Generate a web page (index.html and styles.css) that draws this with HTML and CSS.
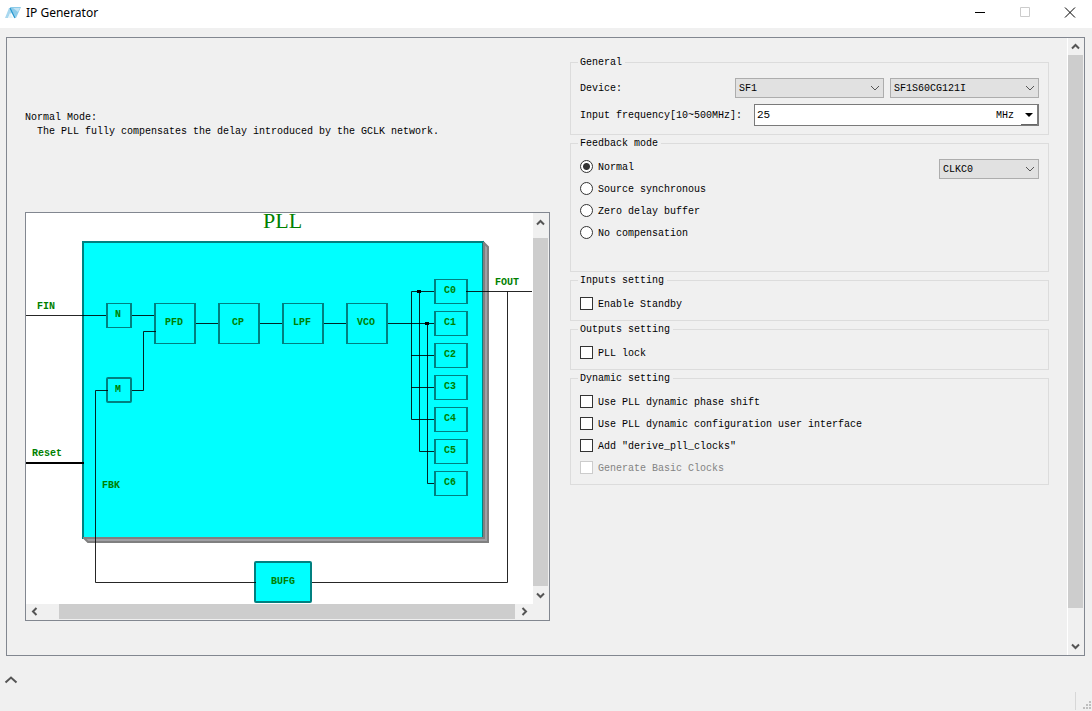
FILE: index.html
```html
<!DOCTYPE html>
<html lang="en">
<head>
<meta charset="utf-8">
<title>IP Generator</title>
<link rel="stylesheet" href="styles.css">
</head>
<body>
<header class="titlebar">
  <svg class="logo" width="16" height="12" viewBox="0 0 16 12" aria-hidden="true">
    <path d="M5 0H16L11 11Z" fill="#8ccbe9"/>
    <path d="M8 1H15L13 5Z" fill="#c3e3f3"/>
    <path d="M0 11L4 1L7 6L5 7L3 11Z" fill="#a9d8ef"/>
    <path d="M5 1L10 11" stroke="#2c9bd2" stroke-width="1.500"/>
    <path d="M3 11L5 6L8 11Z" fill="#e6f5fb"/>
  </svg>
  <h1 class="title">IP Generator</h1>
  <div class="window-buttons">
    <button class="window-button" type="button" aria-label="Minimize"><svg width="12" height="12" viewBox="0 0 12 12"><path d="M1 5.500H11" stroke="#000"/></svg></button>
    <button class="window-button" type="button" aria-label="Maximize" disabled><svg width="12" height="12" viewBox="0 0 12 12"><path d="M1.500 .5H10.500V9.500H1.500Z" fill="none" stroke="#ccc"/></svg></button>
    <button class="window-button" type="button" aria-label="Close"><svg width="12" height="12" viewBox="0 0 12 12"><path d="M1 .5L11 10.500M11 .5L1 10.500" stroke="#000"/></svg></button>
  </div>
</header>

<main class="frame">
  <div class="content">
    <section class="overview">
      <div class="description">
        <p>Normal Mode:</p>
        <p class="indented">The PLL fully compensates the delay introduced by the GCLK network.</p>
      </div>
      <div class="diagram">
        <svg class="drawing" viewBox="26 213 507 391" role="img" aria-label="PLL block diagram">
          <path class="shadow" d="M84 538L88 542H488V247L484 243V538Z"/>
          <rect class="chip" x="83" y="242" width="400" height="296"/>
          <path class="shadow-edge" d="M83 538H485M484 539V242"/>
          <g class="block">
            <path d="M106 303h26v25h-26zM108 304v23h22v-23z"/>
            <path d="M154 303h42v41h-42zM156 304v39h38v-39z"/>
            <path d="M218 303h42v41h-42zM220 304v39h38v-39z"/>
            <path d="M282 303h42v41h-42zM284 304v39h38v-39z"/>
            <path d="M346 303h42v41h-42zM348 304v39h38v-39z"/>
            <path d="M434 279h34v25h-34zM436 280v23h30v-23z"/>
            <path d="M434 311h34v25h-34zM436 312v23h30v-23z"/>
            <path d="M434 343h34v25h-34zM436 344v23h30v-23z"/>
            <path d="M434 375h34v25h-34zM436 376v23h30v-23z"/>
            <path d="M434 407h34v25h-34zM436 408v23h30v-23z"/>
            <path d="M434 439h34v25h-34zM436 440v23h30v-23z"/>
            <path d="M434 471h34v25h-34zM436 472v23h30v-23z"/>
          </g>
          <rect class="chip" x="107" y="378" width="24" height="24" rx="1"/>
          <rect class="chip" x="255" y="562" width="56" height="40" rx="1"/>
          <g class="wire">
            <path d="M26 315.500H106M132 315.500H154M196 323.500H218M260 323.500H282M324 323.500H346M388 323.500H434"/>
            <path d="M132 390.500H143.500V331.500H156M108 390.500H95.500V582.500H256M312 582.500H507.500V291.500"/>
            <path d="M434 291.500H411.500V419.500H434M411 355.500H434M411 387.500H434M419.500 291V451.500H434M427.500 323V483.500H434M466 291.500H532"/>
          </g>
          <path d="M26 462H84V464H26ZM417 290h4v3h-4zM425 322h4v3h-4z"/>
          <text class="heading" x="263" y="228">PLL</text>
          <g class="label">
            <text x="37" y="309">FIN</text>
            <text x="115" y="317">N</text>
            <text x="165" y="325">PFD</text>
            <text x="232" y="325">CP</text>
            <text x="293" y="325">LPF</text>
            <text x="357" y="325">VCO</text>
            <text x="115" y="392">M</text>
            <text x="444" y="293">C0</text>
            <text x="444" y="325">C1</text>
            <text x="444" y="357">C2</text>
            <text x="444" y="389">C3</text>
            <text x="444" y="421">C4</text>
            <text x="444" y="453">C5</text>
            <text x="444" y="485">C6</text>
            <text x="495" y="285">FOUT</text>
            <text x="32" y="456">Reset</text>
            <text x="102" y="488">FBK</text>
            <text x="271" y="584">BUFG</text>
          </g>
        </svg>
        <div class="vbar">
          <button class="scroll-button up" type="button" aria-label="Scroll diagram up"><svg width="9" height="7" viewBox="0 0 9 7"><path d="M1 5.500L4.500 2L8 5.500"/></svg></button>
          <div class="thumb"></div>
          <button class="scroll-button down" type="button" aria-label="Scroll diagram down"><svg width="9" height="7" viewBox="0 0 9 7"><path d="M1 1.500L4.500 5L8 1.500"/></svg></button>
        </div>
        <div class="hbar">
          <button class="scroll-button left" type="button" aria-label="Scroll diagram left"><svg width="7" height="9" viewBox="0 0 7 9"><path d="M5.500 1L2 4.500L5.500 8"/></svg></button>
          <div class="thumb"></div>
          <button class="scroll-button right" type="button" aria-label="Scroll diagram right"><svg width="7" height="9" viewBox="0 0 7 9"><path d="M1.500 1L5 4.500L1.500 8"/></svg></button>
        </div>
      </div>
    </section>

    <form class="settings">
      <fieldset class="group general">
        <legend>General</legend>
        <div class="row">
          <label class="row-label" for="family">Device:</label>
          <select class="drop wide" id="family"><option>SF1</option></select>
          <select class="drop wide" aria-label="Device model"><option>SF1S60CG121I</option></select>
        </div>
        <div class="row">
          <label class="row-label" for="frequency">Input frequency[10~500MHz]:</label>
          <div class="frequency">
            <input class="frequency-value" id="frequency" type="text" value="25">
            <select class="frequency-unit" aria-label="Frequency unit"><option>MHz</option></select>
          </div>
        </div>
      </fieldset>

      <fieldset class="group feedback">
        <legend>Feedback mode</legend>
        <div class="options">
          <label class="option"><input class="radio" type="radio" name="mode" checked>Normal</label>
          <label class="option"><input class="radio" type="radio" name="mode">Source synchronous</label>
          <label class="option"><input class="radio" type="radio" name="mode">Zero delay buffer</label>
          <label class="option"><input class="radio" type="radio" name="mode">No compensation</label>
        </div>
        <select class="drop clock" aria-label="Feedback clock"><option>CLKC0</option></select>
      </fieldset>

      <fieldset class="group">
        <legend>Inputs setting</legend>
        <label class="option"><input class="check" type="checkbox">Enable Standby</label>
      </fieldset>

      <fieldset class="group">
        <legend>Outputs setting</legend>
        <label class="option"><input class="check" type="checkbox">PLL lock</label>
      </fieldset>

      <fieldset class="group">
        <legend>Dynamic setting</legend>
        <label class="option"><input class="check" type="checkbox">Use PLL dynamic phase shift</label>
        <label class="option"><input class="check" type="checkbox">Use PLL dynamic configuration user interface</label>
        <label class="option"><input class="check" type="checkbox">Add "derive_pll_clocks"</label>
        <label class="option disabled"><input class="check" type="checkbox" disabled>Generate Basic Clocks</label>
      </fieldset>
    </form>
  </div>

  <div class="page-bar">
    <button class="scroll-button" type="button" aria-label="Scroll up"><svg width="9" height="7" viewBox="0 0 9 7"><path d="M1 5.500L4.500 2L8 5.500"/></svg></button>
    <div class="page-track"><div class="thumb"></div></div>
    <button class="scroll-button" type="button" aria-label="Scroll down"><svg width="9" height="7" viewBox="0 0 9 7"><path d="M1 1.500L4.500 5L8 1.500"/></svg></button>
  </div>
</main>

<footer class="statusbar">
  <button class="expand" type="button" aria-label="Expand"><svg width="14" height="8" viewBox="0 0 14 8"><path d="M1.500 6.500L7 1.500L12.500 6.500" fill="none" stroke="#555" stroke-width="2"/></svg></button>
  <div class="corner">
    <svg width="9" height="9" viewBox="0 0 9 9" aria-hidden="true"><path d="M6 0h2v2h-2zM3 3h2v2h-2zM6 3h2v2h-2zM0 6h2v2h-2zM3 6h2v2h-2zM6 6h2v2h-2z" fill="#bfbfbf"/></svg>
  </div>
</footer>
</body>
</html>
```

FILE: styles.css
```css
* {
  box-sizing: border-box;
}

body {
  display: flex;
  flex-direction: column;
  min-height: 100vh;
  margin: 0;
  background: #f0f0f0;
  color: #000;
  font: 10px/14px "Liberation Mono", monospace;
}

button,
input,
select {
  margin: 0;
  padding: 0;
  border: 0;
  border-radius: 0;
  background: none;
  color: inherit;
  font: inherit;
}

svg {
  display: block;
}

p {
  margin: 0;
}

.titlebar {
  display: flex;
  align-items: center;
  height: 28px;
  padding-left: 5px;
  padding-bottom: 3px;
  background: #fff;
}

.title {
  flex: 1;
  margin: 0 0 0 5px;
  font: 12px/16px "Noto Sans", sans-serif;
}

.window-buttons {
  display: flex;
}

.window-button {
  display: flex;
  align-items: center;
  justify-content: center;
  width: 45px;
  height: 24px;
}

.frame {
  display: flex;
  flex: 1;
  margin: 9px 7px 0 6px;
  border: 1px solid #828790;
}

.content {
  display: flex;
  flex: 1;
  gap: 20px;
  padding: 18px;
}

.overview {
  flex: 525 1 0;
  min-width: 0;
  padding-top: 55px;
}

.description {
  margin-bottom: 73px;
}

.indented {
  padding-left: 12px;
}

.diagram {
  display: grid;
  grid-template-columns: 1fr 16px;
  grid-template-rows: auto 16px;
  border: 1px solid #828790;
  background: #f0f0f0;
}

.drawing {
  width: 100%;
  overflow: visible;
  background: #fff;
}

.shadow {
  fill: #a0a0a4;
  stroke: #808080;
  stroke-width: 2;
}

.shadow-edge {
  fill: none;
  stroke: #808080;
  stroke-width: 2;
}

.chip {
  fill: #0ff;
  stroke: #008080;
  stroke-width: 2;
}

.block {
  fill: #008080;
  fill-rule: evenodd;
}

.wire {
  fill: none;
  stroke: #000;
  stroke-opacity: 0.85;
}

.heading {
  fill: #008000;
  font: 22px "Liberation Serif", serif;
}

.label {
  fill: #008000;
  font: bold 10px "Liberation Mono", monospace;
}

.vbar {
  display: flex;
  flex-direction: column;
  padding-right: 1px;
}

.hbar {
  display: flex;
  padding-bottom: 1px;
}

.thumb {
  flex: 1;
  background: #cdcdcd;
}

.scroll-button {
  display: flex;
  align-items: center;
  justify-content: center;
  min-height: 15px;
}

.scroll-button path {
  fill: none;
  stroke: #555;
  stroke-width: 2;
}

.up {
  height: 25px;
  padding-bottom: 7px;
}

.down {
  height: 18px;
}

.left {
  width: 33px;
  padding-right: 17px;
}

.right {
  width: 18px;
}

.settings {
  display: flex;
  flex: 479 1 0;
  flex-direction: column;
  gap: 2px;
  min-width: 0;
}

.group {
  min-width: 0;
  margin: 0;
  padding: 7px 9px 5px;
  border: 1px solid #dcdcdc;
}

.group legend {
  height: 12px;
  margin-left: -2px;
  padding: 0 3px 0 2px;
  line-height: 14px;
}

.general {
  display: grid;
  gap: 6px;
  padding-top: 10px;
  padding-bottom: 8px;
}

.row {
  display: flex;
  align-items: center;
  gap: 6px;
}

.row-label {
  flex: 1;
  padding-top: 2px;
  white-space: nowrap;
}

.drop {
  height: 20px;
  padding: 2px 20px 0 3px;
  border: 1px solid #adadad;
  appearance: none;
  background: #e1e1e1 url("data:image/svg+xml,%3Csvg xmlns='http://www.w3.org/2000/svg' width='10' height='6'%3E%3Cpath d='M1 1L5 5L9 1' fill='none' stroke='%23555'/%3E%3C/svg%3E") no-repeat right 3px center;
}

.wide {
  width: 149px;
}

.frequency {
  display: flex;
  width: 285px;
  height: 22px;
  border: 1px solid #7a7a7a;
  background: #fff;
}

.frequency-value {
  flex: 1;
  min-width: 0;
  padding-left: 2px;
  font-size: 11px;
}

.frequency-unit {
  width: 43px;
  padding: 2px 0 0 1px;
  border-right: 1px solid #808080;
  appearance: none;
  background: url("data:image/svg+xml,%3Csvg xmlns='http://www.w3.org/2000/svg' width='16' height='20'%3E%3Cpath d='M4 8H12L8 12Z'/%3E%3Cpath d='M0 19.5H16' stroke='%23666'/%3E%3C/svg%3E") no-repeat right center;
}

.feedback {
  display: flex;
  align-items: flex-start;
  justify-content: space-between;
  padding-bottom: 27px;
}

.clock {
  width: 100px;
  margin-top: 3px;
}

.option {
  display: flex;
  align-items: flex-start;
  gap: 5px;
  height: 22px;
  line-height: 24px;
}

.radio,
.check {
  width: 13px;
  height: 13px;
  margin-top: 4px;
  border: 1px solid #333;
  appearance: none;
  background: #fff;
}

.radio {
  border-radius: 50%;
}

.radio:checked {
  background: radial-gradient(circle, #333 3px, #fff 4px);
}

.disabled {
  color: #838383;
}

.check:disabled {
  border-color: #ccc;
}

.page-bar {
  display: flex;
  flex-direction: column;
  width: 17px;
  padding-right: 1px;
  border-left: 1px solid #fff;
}

.page-bar .scroll-button {
  height: 17px;
}

.page-track {
  display: flex;
  flex: 1;
  flex-direction: column;
  padding-bottom: 30px;
}

.statusbar {
  display: flex;
  align-items: flex-start;
  justify-content: space-between;
  height: 55px;
  padding: 20px 0 1px 4px;
}

.corner {
  display: flex;
  align-items: flex-end;
  align-self: flex-end;
  height: 18px;
  padding-left: 7px;
  border-left: 1px solid #d7d7d7;
}
```
